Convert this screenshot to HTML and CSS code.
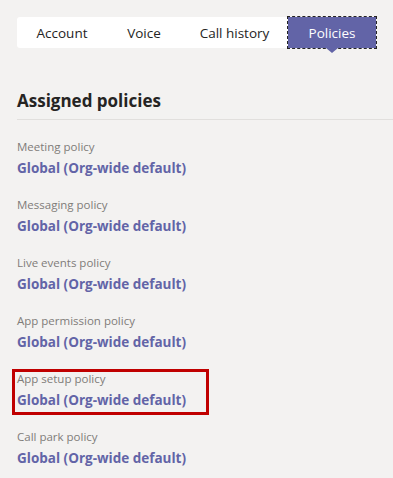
FILE: index.html
```html
<!DOCTYPE html>
<html lang="en">
<head>
  <meta charset="UTF-8" />
  <meta name="viewport" content="width=device-width, initial-scale=1.0"/>
  <title>User policies</title>
  <link rel="stylesheet" href="styles.css">
</head>
<body>
  <div class="tabs">
    <div class="tab tab-account">Account</div>
    <div class="tab tab-voice">Voice</div>
    <div class="tab tab-history">Call history</div>
    <div class="tab tab-policies active">Policies</div>
  </div>

  <h2 class="section-title">Assigned policies</h2>

  <div class="policy-list">
    <div class="policy">
      <div class="policy-label">Meeting policy</div>
      <div class="policy-value">Global (Org-wide default)</div>
    </div>
    <div class="policy">
      <div class="policy-label">Messaging policy</div>
      <div class="policy-value">Global (Org-wide default)</div>
    </div>
    <div class="policy">
      <div class="policy-label">Live events policy</div>
      <div class="policy-value">Global (Org-wide default)</div>
    </div>
    <div class="policy">
      <div class="policy-label">App permission policy</div>
      <div class="policy-value">Global (Org-wide default)</div>
    </div>
    <div class="policy highlight">
      <div class="policy-label">App setup policy</div>
      <div class="policy-value">Global (Org-wide default)</div>
    </div>
    <div class="policy">
      <div class="policy-label">Call park policy</div>
      <div class="policy-value">Global (Org-wide default)</div>
    </div>
  </div>
</body>
</html>
```

FILE: styles.css
```css
body {
  margin: 0;
  padding: 17px 0 0 17px;
  background: #f3f2f1;
  font-family: 'Open Sans', 'Noto Sans', sans-serif;
  color: #252423;
  overflow: hidden;
}

.tabs {
  display: flex;
  width: 359px;
  height: 31px;
}

.tab {
  display: flex;
  align-items: center;
  justify-content: center;
  background: #fff;
  font-size: 13.5px;
  color: #252423;
}

.tab-account { width: 90px; border-radius: 3px 0 0 3px; }
.tab-voice { width: 74px; }
.tab-history { width: 107px; }
.tab-policies { width: 88px; }

.tab.active {
  position: relative;
  background: #6264a7;
  color: #fff;
  outline: 1px dashed #252423;
}

.tab.active::after {
  content: "";
  position: absolute;
  left: 50%;
  bottom: -5px;
  margin-left: -6px;
  border-left: 6px solid transparent;
  border-right: 6px solid transparent;
  border-top: 5px solid #6264a7;
}

.section-title {
  margin: 41px 0 0;
  padding-bottom: 6px;
  border-bottom: 1px solid #e1dfdd;
  font-size: 17px;
  line-height: 24px;
  font-weight: 700;
}

.policy-list {
  padding-top: 19px;
}

.policy {
  position: relative;
  margin-bottom: 19px;
}

.policy-label {
  font-size: 11.5px;
  line-height: 16px;
  color: #7f7c79;
}

.policy-value {
  margin-top: 3px;
  font-size: 13.5px;
  line-height: 20px;
  font-weight: 700;
  color: #6264a7;
}

.highlight::after {
  content: "";
  position: absolute;
  left: -5px;
  top: -2px;
  width: 191px;
  height: 40px;
  border: 3px solid #c00000;
}
```
